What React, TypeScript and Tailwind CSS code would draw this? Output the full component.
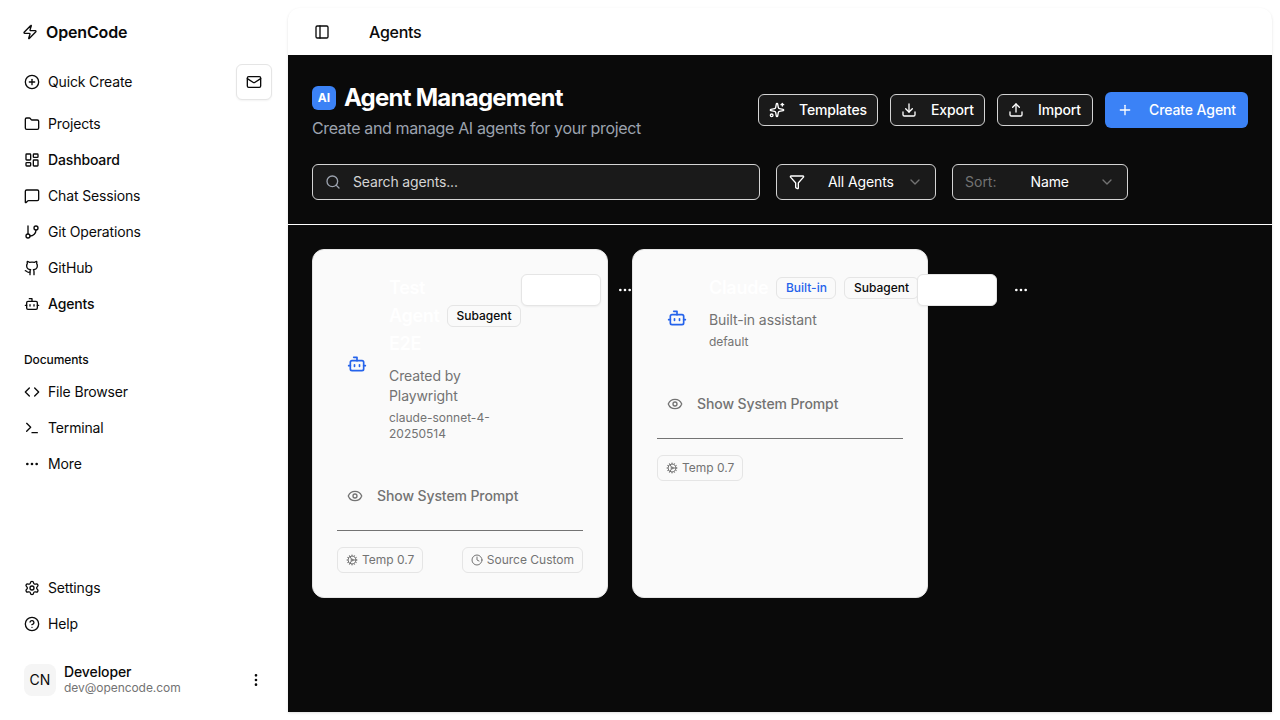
import { Zap, CirclePlus, Mail, Folder, LayoutDashboard, MessageSquare, GitBranch, Github, Bot, Code, Terminal, Ellipsis, Settings, CircleHelp, EllipsisVertical, PanelLeft, Sparkles, Download, Upload, Plus, Search, Funnel, ChevronDown, Eye, Cog, Clock } from "lucide-react";
import type { ReactNode } from "react";

function NavItem({ icon, label, medium }: { icon: ReactNode; label: string; medium?: boolean }) {
  return (
    <div className={`flex h-9 items-center gap-2 px-4 text-sm tracking-[-0.15px] text-[#0a0a0a] ${medium ? "font-medium" : ""}`}>
      {icon}
      <span>{label}</span>
    </div>
  );
}

function Badge({ children, blue }: { children: ReactNode; blue?: boolean }) {
  return (
    <span className={`flex h-[22px] shrink-0 items-center rounded-md border border-[#e5e5e5] bg-[#fafafa] px-[8.5px] text-xs font-medium ${blue ? "text-[#2563eb]" : "text-[#0a0a0a]"}`}>
      {children}
    </span>
  );
}

function Meta({ icon, label }: { icon: ReactNode; label: string }) {
  return (
    <span className="flex h-[26px] items-center gap-1 rounded-md border border-[#e5e5e5] px-2 text-xs text-[#737373]">
      {icon}
      {label}
    </span>
  );
}

function AgentCard({ columnClass, title, titleClass, badges, desc, model, source }: { columnClass: string; title: string; titleClass: string; badges: ReactNode; desc: string; model: string; source?: boolean }) {
  return (
    <div className="flex flex-col rounded-xl border border-[#e5e5e5] bg-[#fafafa] p-6">
      <div className="flex items-center">
        <div className="mt-3 flex h-10 w-10 shrink-0 items-center justify-center">
          <Bot size={20} className="text-[#2563eb]" />
        </div>
        <div className={`ml-3 shrink-0 ${columnClass}`}>
          <div className="flex items-center gap-2">
            <h3 className={`text-lg leading-7 font-semibold tracking-[-0.3px] text-white ${titleClass}`}>{title}</h3>
            {badges}
          </div>
          <p className="mt-2 text-sm leading-5 tracking-[-0.1px] text-[#737373]">{desc}</p>
          <p className="mt-1 text-xs leading-4 text-[#737373]">{model}</p>
        </div>
        <div className="flex shrink-0 items-center gap-2 self-start">
          <div className="h-8 w-20 rounded-md border border-[#e5e5e5] bg-white shadow-xs" />
          <div className="flex h-8 w-8 items-center justify-center text-white">
            <Ellipsis size={16} />
          </div>
        </div>
      </div>
      <div className="mt-9 flex h-9 items-center gap-3.5 px-2.5 text-sm font-medium tracking-[-0.1px] text-[#737373]">
        <Eye size={16} />
        <span>Show System Prompt</span>
      </div>
      <div className="mt-4 flex justify-between gap-2 border-t border-[#737373] pt-4">
        <Meta icon={<Cog size={12} />} label="Temp 0.7" />
        {source && <Meta icon={<Clock size={12} />} label="Source Custom" />}
      </div>
    </div>
  );
}

function ActionButton({ icon, label, widthClass }: { icon: ReactNode; label: string; widthClass: string }) {
  return (
    <button className={`flex h-8 items-center gap-3.5 rounded-md border border-[#d4d4d4] bg-[#1a1a1a] px-2.5 text-sm font-medium tracking-[-0.15px] text-white ${widthClass}`}>
      {icon}
      {label}
    </button>
  );
}

export default function App() {
  return (
    <div className="flex h-[720px] w-[1280px] overflow-hidden bg-white font-['Inter',sans-serif] text-[#0a0a0a]">
      <aside className="flex h-full w-[288px] shrink-0 flex-col p-2">
        <div className="flex h-12 items-center gap-2 px-3.5 text-base font-semibold tracking-[-0.15px]">
          <Zap size={16} />
          <span>OpenCode</span>
        </div>
        <div className="mt-2 flex items-center justify-between pr-2">
          <div className="flex h-9 items-center gap-2 px-4 text-sm tracking-[-0.15px]">
            <CirclePlus size={16} />
            <span>Quick Create</span>
          </div>
          <div className="flex h-9 w-9 items-center justify-center rounded-md border border-[#e5e5e5] bg-white shadow-xs">
            <Mail size={16} />
          </div>
        </div>
        <div className="mt-1.5 flex flex-col">
          <NavItem icon={<Folder size={16} />} label="Projects" />
          <NavItem icon={<LayoutDashboard size={16} />} label="Dashboard" medium />
          <NavItem icon={<MessageSquare size={16} />} label="Chat Sessions" />
          <NavItem icon={<GitBranch size={16} />} label="Git Operations" />
          <NavItem icon={<Github size={16} />} label="GitHub" />
          <NavItem icon={<Bot size={16} />} label="Agents" medium />
        </div>
        <div className="mt-[23px] flex h-[29px] items-center px-4 text-xs font-medium tracking-[-0.1px]">Documents</div>
        <div className="flex flex-col">
          <NavItem icon={<Code size={16} />} label="File Browser" />
          <NavItem icon={<Terminal size={16} />} label="Terminal" />
          <NavItem icon={<Ellipsis size={16} />} label="More" />
        </div>
        <div className="mt-auto flex flex-col">
          <NavItem icon={<Settings size={16} />} label="Settings" />
          <NavItem icon={<CircleHelp size={16} />} label="Help" />
          <div className="mt-[22px] mb-4 flex h-8 items-center gap-2 px-4">
            <div className="flex h-8 w-8 items-center justify-center rounded-lg bg-[#f5f5f5] text-sm">CN</div>
            <div className="flex-1">
              <div className="text-sm leading-4 font-medium tracking-[-0.1px]">Developer</div>
              <div className="text-xs leading-4 tracking-[-0.05px] text-[#737373]">dev@opencode.com</div>
            </div>
            <EllipsisVertical size={16} />
          </div>
        </div>
      </aside>

      <main className="my-2 mr-2 flex min-w-0 flex-1 flex-col overflow-hidden rounded-t-xl bg-white shadow-sm">
        <header className="flex h-[47px] shrink-0 items-center pl-[26px]">
          <PanelLeft size={16} />
          <span className="ml-[39px] text-base font-medium tracking-[-0.3px]">Agents</span>
        </header>
        <div className="flex-1 bg-[#0a0a0a]">
          <div className="border-b border-white px-6 pt-[29px] pb-6">
            <div className="flex items-start justify-between">
              <div>
                <div className="flex h-7 items-center gap-2">
                  <span className="flex h-6 w-6 items-center justify-center rounded-md bg-[#3b82f6] text-xs font-bold text-white">AI</span>
                  <h1 className="text-2xl font-bold tracking-[-0.75px] text-white">Agent Management</h1>
                </div>
                <p className="mt-1 text-base tracking-[-0.36px] text-[#9ca3af]">Create and manage AI agents for your project</p>
              </div>
              <div className="mt-2 flex items-center gap-3">
                <ActionButton icon={<Sparkles size={16} />} label="Templates" widthClass="w-[120px]" />
                <ActionButton icon={<Download size={16} />} label="Export" widthClass="w-[95px]" />
                <ActionButton icon={<Upload size={16} />} label="Import" widthClass="w-[96px]" />
                <button className="flex h-9 items-center gap-4 rounded-md bg-[#3b82f6] px-3 text-sm font-medium tracking-[-0.1px] text-white">
                  <Plus size={16} />
                  Create Agent
                </button>
              </div>
            </div>
            <div className="mt-6 flex items-center gap-4">
              <div className="flex h-9 w-[448px] items-center gap-3 rounded-md border border-[#d4d4d4] bg-[#1a1a1a] px-3 text-sm tracking-[-0.15px] text-[#d4d4d4]">
                <Search size={16} className="text-[#9ca3af]" />
                <span>Search agents...</span>
              </div>
              <div className="flex h-9 w-40 items-center rounded-md border border-[#d4d4d4] bg-[#1a1a1a] px-3 text-sm text-white">
                <Funnel size={16} />
                <span className="ml-[23px] tracking-[-0.1px]">All Agents</span>
                <ChevronDown size={16} className="ml-auto text-[#737373]" />
              </div>
              <div className="flex h-9 w-44 items-center rounded-md border border-[#d4d4d4] bg-[#1a1a1a] px-3 text-sm text-white">
                <span className="text-[#737373]">Sort:</span>
                <span className="ml-[34px] tracking-[-0.1px]">Name</span>
                <ChevronDown size={16} className="ml-auto text-[#737373]" />
              </div>
            </div>
          </div>
          <div className="grid grid-cols-3 gap-6 p-6">
            <AgentCard columnClass="w-[132px]" title="Test Agent E2E" titleClass="w-[50px]" badges={<Badge>Subagent</Badge>} desc="Created by Playwright" model="claude-sonnet-4-20250514" source />
            <AgentCard columnClass="w-[208px]" title="Claude" titleClass="" badges={<><Badge blue>Built-in</Badge><Badge>Subagent</Badge></>} desc="Built-in assistant" model="default" />
          </div>
        </div>
      </main>
    </div>
  );
}
